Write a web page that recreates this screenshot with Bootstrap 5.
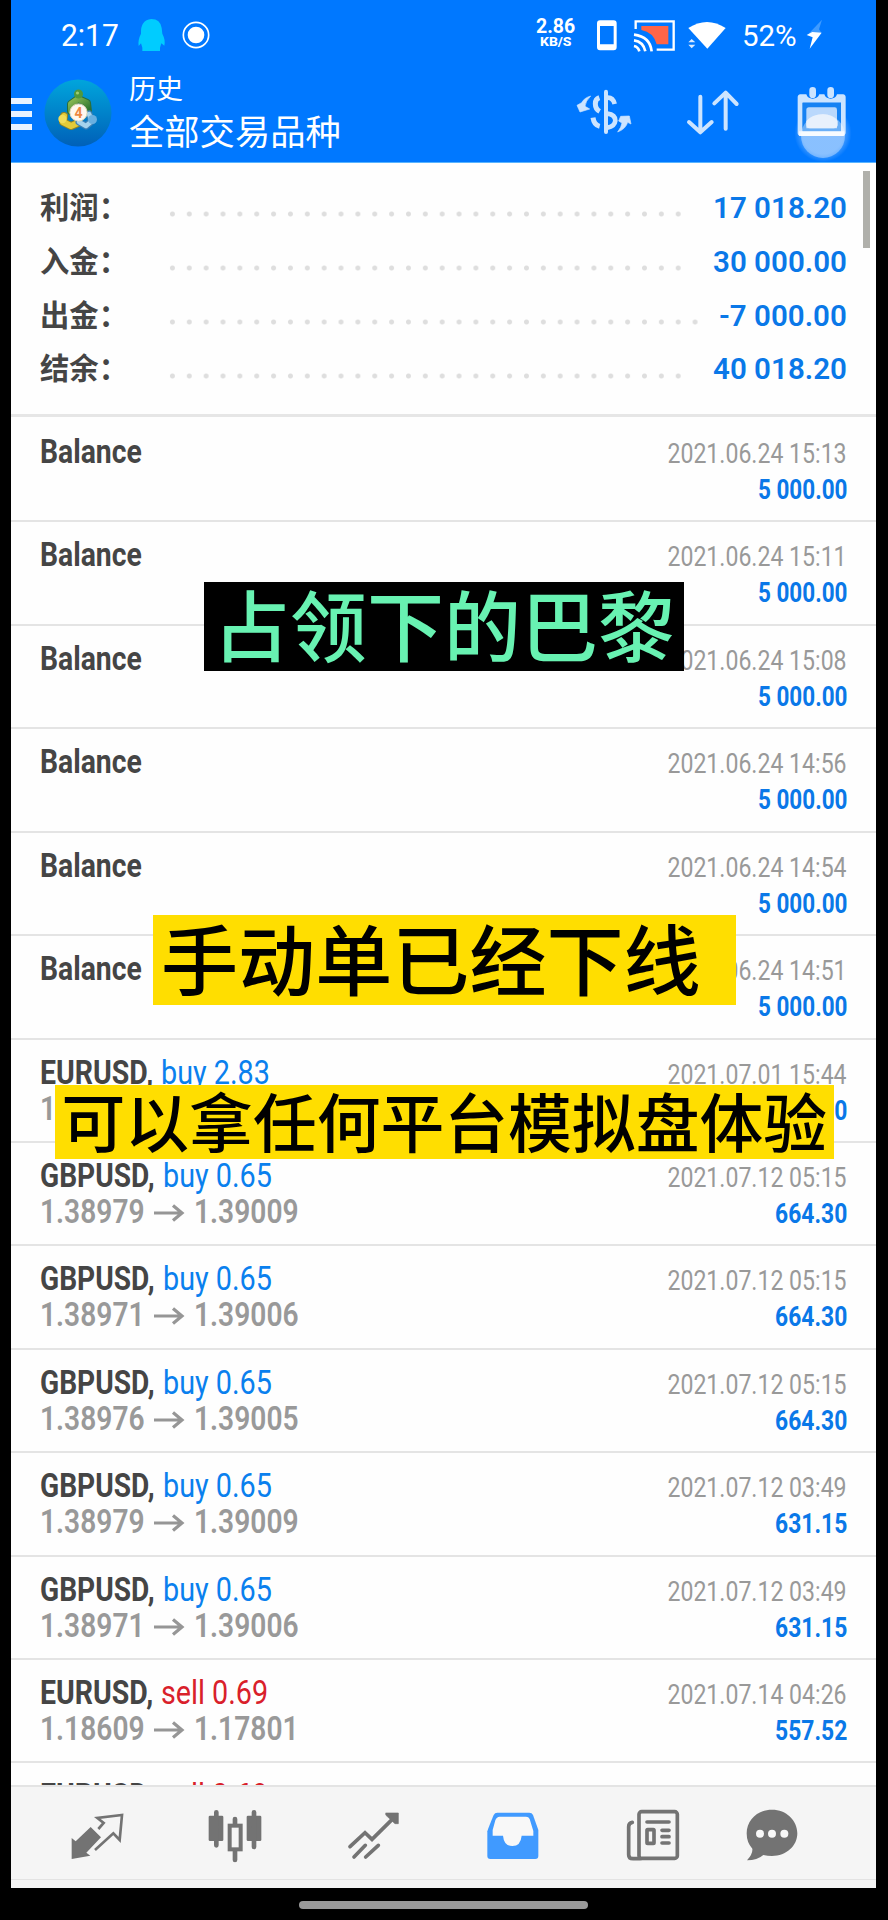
<!DOCTYPE html>
<html lang="zh-CN">
<head>
<meta charset="utf-8">
<title>历史</title>
<link rel="stylesheet" href="https://cdn.jsdelivr.net/npm/bootstrap@5.3.0/dist/css/bootstrap.min.css">
<style>
body{width:888px;height:1920px;background:#000;font-family:Roboto,"Noto Sans CJK SC",sans-serif;overflow:hidden}
.screen{width:865px;height:1888px;margin-left:11px;background:#fefefe;overflow:hidden}
.topbar{height:163px;background:#0078ff;color:#fff;border-bottom:1px solid #59b4ff}
.statusbar{height:62px}
.fit{display:inline-block;white-space:pre;transform-origin:0 50%}
.fit.end{transform-origin:100% 50%}
.clock{font-size:31px;line-height:36px;padding-top:18px}
.rate{line-height:15px;padding-top:19px;width:39px}
.rate b{display:block;font-size:20px;font-weight:700}
.rate small{display:block;font-size:13.5px;font-weight:800;line-height:14px}
.toolbar-row{height:100px}
.burger{width:21px;padding-top:36px}
.burger i{display:block;height:6px;background:#e8f3ff;margin-bottom:7px}
.titles{margin-left:17px;padding-top:10px}
.titles .t1{font-size:27px;line-height:36px}
.titles .t2{font-size:35.3px;line-height:40px;margin-top:5px;white-space:nowrap}
.summary{height:254px;padding:18px 29px 0;border-bottom:3px solid #e6e6e6;position:relative}
.sumrow{height:53.75px}
.sumrow .lbl{font-size:30px;font-weight:600;color:#454545;width:124px;line-height:54px}
.dots{height:6px;margin-top:30.3px;width:523px;background:radial-gradient(circle at 8.43px 3px,#dedede 2px,rgba(222,222,222,0) 3px) 0 0/16.86px 6px repeat-x}
.dots.long{width:539.6px}
.val{font-size:30px;font-weight:600;color:#0a78e8;line-height:54px}
.thumb{position:absolute;right:6px;top:8px;width:7px;height:77px;background:#b0b0ab}
.history{height:1367.5px;overflow:hidden}
.deal{height:103.43px;padding:15px 29px 0;border-bottom:2px solid #e4e4e4}
.deal:first-child{height:105.4px;padding-top:16.6px}
.deal .line{height:36px;line-height:36px}
.sym{font-size:33px;font-weight:700;color:#454545}
.side{font-size:33px;color:#0a80ee;margin-left:7.5px}
.side.sell{color:#d9202a}
.date{font-size:27px;color:#999}
.price{font-size:33px;font-weight:600;color:#999}
.amt{font-size:27px;font-weight:700;color:#0a78e8}
.slot{display:inline-block;flex:none;white-space:nowrap}
.tabs{height:103px;background:#f5f5f5;border-top:2px solid #e4e4e4;padding:19px 0 0 56px;position:relative}
.tabs svg{flex:none}
.tabs:after{content:"";position:absolute;left:0;right:0;bottom:8px;height:1px;background:#e3e3e3}
.homebar{width:289px;height:8px;border-radius:4px;background:#999;margin:13px 0 0 299px}
.caption-box{position:absolute;font-family:"Noto Sans CJK SC",sans-serif;font-weight:500;white-space:nowrap;color:#000;background:#ffde00}
.cap-a{left:204px;top:582px;width:480px;height:89px;background:#000;color:#68f2b2;font-size:77px;line-height:82px;padding-left:9px}
.cap-b{left:153px;top:915px;width:582.5px;height:90px;font-size:77.1px;line-height:83px;padding-left:8px}
.cap-c{left:54.5px;top:1085px;width:779.5px;height:74px;font-size:63.8px;line-height:69px;padding-left:7px}
</style>
<script src="https://cdn.jsdelivr.net/npm/bootstrap@5.3.0/dist/js/bootstrap.bundle.min.js"></script>
</head>
<body class="m-0 position-relative">
<div class="screen d-flex flex-column">
  <header class="topbar flex-shrink-0">
    <div class="statusbar d-flex align-items-start">
      <div class="clock" style="margin-left:50px;width:74px"><span class="fit" data-w="58">2:17</span></div>
      <svg width="76" height="36" viewBox="409 51 228 108" style="margin-top:17px;margin-left:2px"><path d="M452 57Q479 57 483 84L485 101Q495 120 491 137L482 130L478 143V153H425V143L421 130L414 138Q411 120 421 101Q419 60 452 57" fill="#00ccff"/><circle cx="586" cy="105" r="38" fill="none" stroke="#fff" stroke-width="5"/><circle cx="586" cy="105" r="25" fill="#fff"/></svg>
      <div class="rate text-center" style="margin-left:322.5px"><b><span class="fit" data-w="39">2.86</span></b><small><span class="fit" data-w="32">KB/S</span></small></div>
      <svg width="140" height="36" viewBox="450 51 420 108" style="margin-top:17px;margin-left:19.5px">
        <path fill-rule="evenodd" fill="#fff" d="M468 61H509Q518 61 518 70V142Q518 151 509 151H468Q459 151 459 142V70Q459 61 468 61M468 78V133H509V78z"/>
        <path d="M592 78H673V133H638Q628 96 592 90z" fill="#ff6547"/>
        <path d="M575 87V64H689V149H638" fill="none" stroke="#fff" stroke-width="7"/>
        <path d="M570 104Q618 110 623 154M570 121Q598 125 604 154M570 138Q583 141 586 154" fill="none" stroke="#fff" stroke-width="8"/>
        <path d="M733 84Q789 48 845 84L790 146z" fill="#fff"/>
        <path d="M733 127L743 117L754 127zM733 134L743 145L754 134z" fill="#d9eaff"/>
      </svg>
      <div class="clock" style="margin-left:8px;width:61px;font-size:30px"><span class="fit" data-w="55">52%</span></div>
      <svg width="20" height="32" viewBox="1084 60 60 96" style="margin-top:19px;margin-left:2px"><path d="M1135 62L1092 107L1110 110L1133 101L1126 91z" fill="#3f9bff"/><path d="M1089 108L1106 99L1134 101L1098 149L1107 115z" fill="#fff"/></svg>
    </div>
    <div class="toolbar-row d-flex align-items-start">
      <div class="burger"><i></i><i></i><i></i></div>
      <svg width="68" height="68" viewBox="0 0 68 68" style="margin-left:12px;margin-top:17px">
        <defs><linearGradient id="sea" x1="0" y1="0" x2="0" y2="1"><stop offset="0" stop-color="#00a5dc"/><stop offset="1" stop-color="#0060b8"/></linearGradient>
        <linearGradient id="leaf" x1="0" y1="0" x2="1" y2="1"><stop offset="0" stop-color="#8dbd55"/><stop offset="1" stop-color="#286f2c"/></linearGradient></defs>
        <circle cx="34" cy="34" r="33.5" fill="url(#sea)"/>
        <g fill="none" stroke-linecap="round" stroke-linejoin="round">
          <path d="M27 32V25L34 20L43 24L44 33" stroke="#2a6d3b" stroke-width="8"/><path d="M27 32V25L34 20L43 24L44 33" stroke="url(#leaf)" stroke-width="6"/>
          <path d="M20 37L19 43L27 47L34 44" stroke="#8f8428" stroke-width="8"/><path d="M20 37L19 43L27 47L34 44" stroke="#e3cb39" stroke-width="6"/>
          <path d="M35 43L42 47L48 42L45 35" stroke="#3b80b6" stroke-width="7"/><path d="M35 43L42 47L48 42L45 35" stroke="#a5d3ed" stroke-width="4.5"/>
        </g>
        <circle cx="34.5" cy="15" r="4.5" fill="#4f983d"/><circle cx="33.5" cy="14" r="1.6" fill="#9dcc70"/>
        <circle cx="18.5" cy="40" r="4.2" fill="#f0dd59"/><circle cx="48.5" cy="40.5" r="4.5" fill="#68afe0"/>
        <circle cx="34.5" cy="33.5" r="8.6" fill="#fff7ee" stroke="#e1dabb"/>
        <text x="34.5" y="38.7" text-anchor="middle" font-family="Roboto" font-size="14" font-weight="700" fill="#ee8740">4</text>
      </svg>
      <div class="titles"><div class="t1">历史</div><div class="t2">全部交易品种</div></div>
      <svg class="ms-auto" width="60" height="50" viewBox="390 260 180 150" style="margin-top:24.7px" fill="none" stroke="#cce4ff" stroke-width="12">
        <path d="M486 274V395" stroke-linecap="round"/><path d="M466 292Q454 296 454 310Q454 326 467 333M447 352Q450 374 467 378" stroke-width="15"/><path d="M490 292Q507 291 512 311M490 340Q514 343 514 361Q512 378 490 382" stroke-width="14"/>
        <path d="M440 287Q420 293 413 307L399 315L408 335L437 326L423 318Q424 303 440 287M521 395Q532 381 534 368L524 362L530 348L556 347L561 371L551 366Q545 386 521 395" fill="#cce4ff" stroke-width="2"/>
      </svg>
      <svg width="60" height="50" viewBox="720 260 180 150" style="margin-top:24.7px;margin-left:50px" fill="none" stroke="#cce4ff" stroke-width="12" stroke-linecap="round" stroke-linejoin="round"><path d="M769 289V396M735 365L769 396L803 365M845 385V277M811 309L845 277L878 311"/></svg>
      <svg width="60" height="76" viewBox="1045 255 180 228" style="margin-top:23px;margin-left:48.3px;margin-right:23.7px;overflow:visible">
        <defs><radialGradient id="touch"><stop offset=".72" stop-color="#8fc3ff" stop-opacity=".5"/><stop offset="1" stop-color="#8fc3ff" stop-opacity="0"/></radialGradient></defs>
        <circle cx="1138" cy="400" r="86" fill="url(#touch)"/>
        <path fill-rule="evenodd" fill="#cce4ff" d="M1070 283H1088Q1092 296 1107 296Q1122 296 1127 283H1142Q1146 296 1161 296Q1176 296 1180 283H1198Q1206 284 1206 292V400Q1204 408 1197 408H1072Q1063 408 1062 400V292Q1062 284 1070 283M1078 308V394H1192V308z"/>
        <path d="M1107 271V284M1161 271V284" stroke="#cce4ff" stroke-width="20" stroke-linecap="round"/>
        <rect x="1076" y="308" width="116" height="86" fill="#1682f3"/>
        <path d="M1096 322H1173Q1180 322 1180 329V385H1088V330Q1088 322 1096 322" fill="#b9d8fc"/>
        <circle cx="1138" cy="408" r="66" fill="#fff" fill-opacity=".36"/>
        <path d="M1088 363Q1104 344 1138 343Q1167 344 1182 363V376Q1180 385 1170 385H1098Q1088 384 1088 375z" fill="#e8f1fc"/>
        <path d="M1066 401H1202" stroke="#fff" stroke-width="14" stroke-opacity=".75"/>
      </svg>
    </div>
  </header>
  <section class="summary flex-shrink-0" id="summary"><div class="thumb"></div></section>
  <main class="history flex-shrink-0" id="history"></main>
  <nav class="tabs d-flex flex-shrink-0 align-items-start">
    <svg width="60" height="60" viewBox="202 498 180 180"><path d="M216 594L228 604L273 561L304 592L260 638L272 647L216 657z" fill="#737373"/><path d="M286 630L341 580L360 600L367 525L293 534L312 549L296 567" fill="none" stroke="#737373" stroke-width="8"/></svg>
    <svg width="60" height="60" viewBox="616 498 180 180" style="margin-left:78px"><g fill="#737373"><rect x="627" y="527" width="44" height="76" rx="4"/><rect x="741" y="527" width="44" height="76" rx="4"/></g><path d="M650 517V616M763 517V621M706 537V555M706 632V660" stroke="#737373" stroke-width="14" stroke-linecap="round"/><rect x="690" y="557" width="33" height="71" fill="#f5f5f5" stroke="#737373" stroke-width="12"/></svg>
    <svg width="60" height="60" viewBox="1034 498 180 180" style="margin-left:79.2px" fill="none" stroke="#737373" stroke-width="11" stroke-linecap="round"><path d="M1052 620L1097 578L1118 598L1190 527M1064 651L1098 616M1099 651L1137 616"/><path d="M1160 519H1197V551H1187L1160 526z" fill="#737373" stroke-width="2"/></svg>
    <svg width="60" height="60" viewBox="131 498 180 180" style="margin-left:79px"><path d="M174 518H270Q278 518 281 525L297 570V648Q297 657 288 657H153Q144 657 144 648V574Q145 569 163 525Q166 518 174 518" fill="#409aff"/><path d="M181 530H260Q268 530 271 537L282 573V587H247Q244 618 219 618Q194 618 191 587H160V570L168 541Q172 530 181 530" fill="#f8f8f8"/></svg>
    <svg width="60" height="60" viewBox="550 498 180 180" style="margin-left:79.6px" fill="none" stroke="#737373" stroke-width="11" stroke-linecap="round"><rect x="598" y="515" width="115" height="140" rx="8"/><path d="M578 547Q567 549 567 560V644Q567 656 580 656H602M622 546H688M667 571H688M667 590H688M667 609H688"/><rect x="622" y="569" width="21" height="41" rx="2"/></svg>
    <svg width="60" height="60" viewBox="909 498 180 180" style="margin-left:59.7px"><path d="M999 509C1042 509 1075 541 1075 580C1075 618 1042 648 999 648Q985 648 973 645Q955 661 924 661Q942 641 940 626Q923 608 923 580C923 541 956 509 999 509" fill="#737373"/><g fill="#f8f8f8"><circle cx="963" cy="581" r="12"/><circle cx="999" cy="581" r="12"/><circle cx="1036" cy="581" r="12"/></g></svg>
  </nav>
</div>
<div class="homebar"></div>
<div class="caption-box cap-a">占领下的巴黎</div>
<div class="caption-box cap-b">手动单已经下线</div>
<div class="caption-box cap-c">可以拿任何平台模拟盘体验</div>
<script>
const totals=[["利润：","17 018.20"],["入金：","30 000.00"],["出金：","-7 000.00"],["结余：","40 018.20"]];
document.getElementById("summary").insertAdjacentHTML("beforeend",totals.map(([k,v])=>
 `<div class="sumrow d-flex align-items-start"><span class="lbl"><span class="fit" data-w="88">${k}</span></span><span class="dots ${v[0]==="-"?"long":""}"></span><span class="val ms-auto"><span class="fit end" data-w="${v[0]==="-"?128:134}">${v}</span></span></div>`).join(""));
const bal=t=>["Balance",102,"","","2021.06.24 "+t,"5 000.00"];
const gbp=(a,b,t,m)=>["GBPUSD,",115,"buy 0.65",a,"2021.07.12 "+t,m,b];
const deals=[bal("15:13"),bal("15:11"),bal("15:08"),bal("14:56"),bal("14:54"),bal("14:51"),
["EURUSD,",113,"buy 2.83","1.18421","2021.07.01 15:44","650.90","1.18651"],
gbp("1.38979","1.39009","05:15","664.30"),gbp("1.38971","1.39006","05:15","664.30"),gbp("1.38976","1.39005","05:15","664.30"),
gbp("1.38979","1.39009","03:49","631.15"),gbp("1.38971","1.39006","03:49","631.15"),
["EURUSD,",113,"sell 0.69","1.18609","2021.07.14 04:26","557.52","1.17801"],
["EURUSD,",113,"sell 0.69","","","",""]];
const fit=(c,w,t)=>`<span class="slot ${c}" style="width:${w}px"><span class="fit" data-w="${w}">${t}</span></span>`;
const arrow=`<svg width="32" height="20" viewBox="0 0 32 20" style="margin:0 9px 0 8px;flex:none"><path d="M1 10H29M20 2.5L29 10L20 17.5" fill="none" stroke="#969696" stroke-width="3.2"/></svg>`;
document.getElementById("history").innerHTML=deals.map(([s,w,side,a,d,m,b])=>
 `<article class="deal"><div class="line d-flex align-items-baseline">${fit("sym",w,s)}${side?fit("side "+(side[0]==="s"?"sell":""),side[0]==="s"?107:109,side):""}${d?`<span class="date ms-auto"><span class="fit end" data-w="179.5">${d}</span></span>`:""}</div>
 <div class="line d-flex align-items-baseline">${a?fit("price",105,a)+arrow+fit("price",105,b):`<span class="price">&#8203;</span>`}${m?`<span class="amt ms-auto"><span class="fit end" data-w="${m.length>6?90:72}">${m}</span></span>`:""}</div></article>`).join("");
document.querySelectorAll(".fit").forEach(e=>{e.style.transform=`scaleX(${e.dataset.w/e.offsetWidth})`});
</script>
</body>
</html>
